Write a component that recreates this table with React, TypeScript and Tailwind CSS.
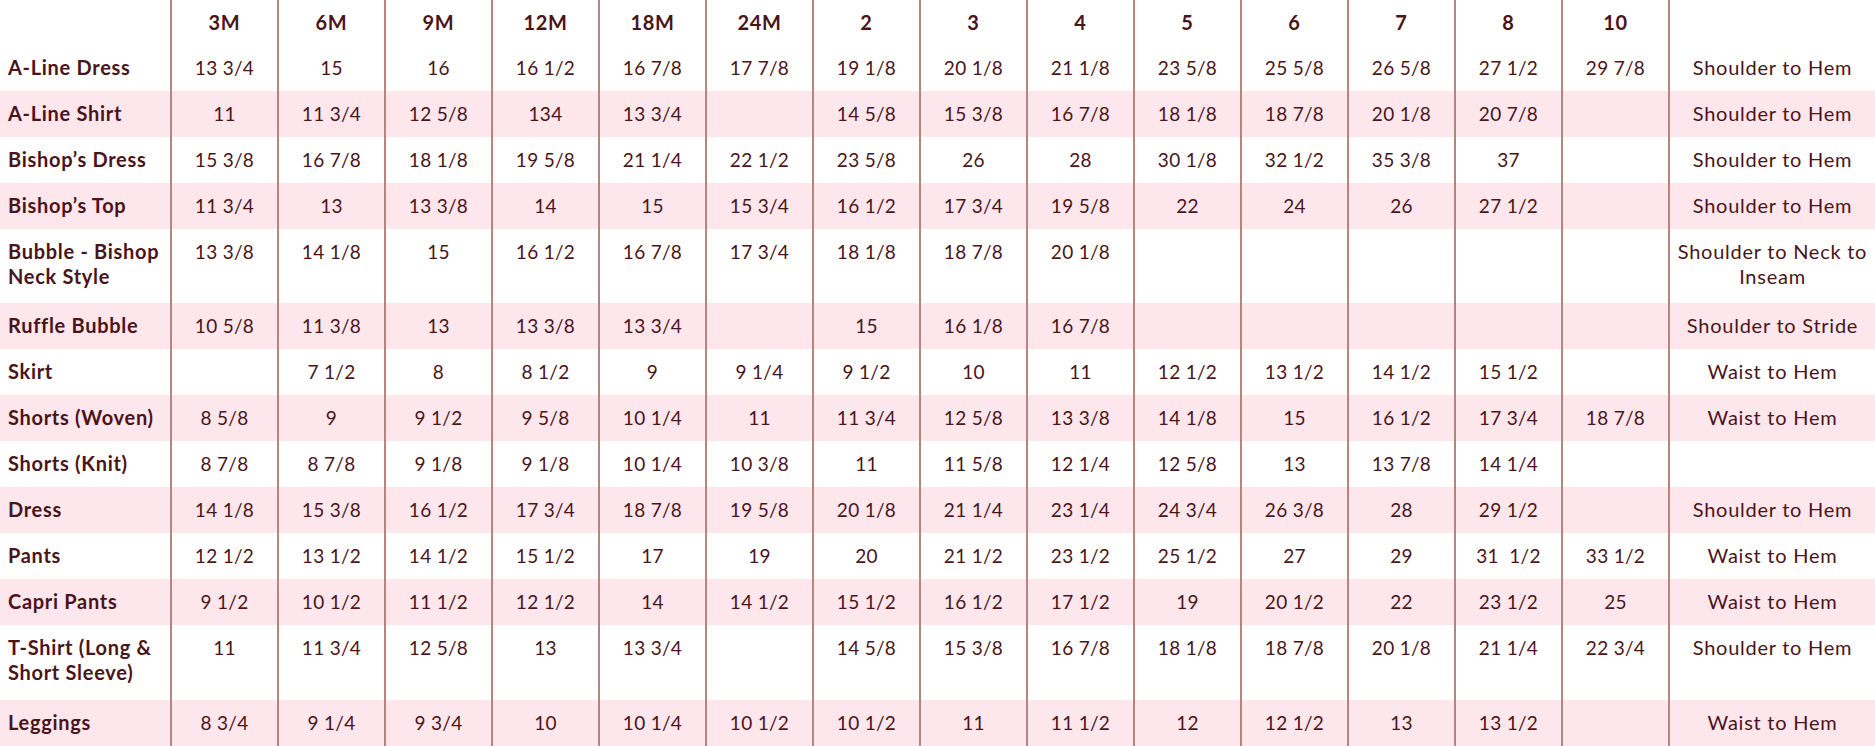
import React from "react";

type Row = { label: React.ReactNode; vals: string[]; note: React.ReactNode; pink: boolean; h: string };

const headers = ["3M", "6M", "9M", "12M", "18M", "24M", "2", "3", "4", "5", "6", "7", "8", "10"];

const rows: Row[] = [
  { label: "A-Line Dress", vals: ["13 3/4", "15", "16", "16 1/2", "16 7/8", "17 7/8", "19 1/8", "20 1/8", "21 1/8", "23 5/8", "25 5/8", "26 5/8", "27 1/2", "29 7/8"], note: "Shoulder to Hem", pink: false, h: "h-[46px]" },
  { label: "A-Line Shirt", vals: ["11", "11 3/4", "12 5/8", "134", "13 3/4", "", "14 5/8", "15 3/8", "16 7/8", "18 1/8", "18 7/8", "20 1/8", "20 7/8", ""], note: "Shoulder to Hem", pink: true, h: "h-[46px]" },
  { label: "Bishop’s Dress", vals: ["15 3/8", "16 7/8", "18 1/8", "19 5/8", "21 1/4", "22 1/2", "23 5/8", "26", "28", "30 1/8", "32 1/2", "35 3/8", "37", ""], note: "Shoulder to Hem", pink: false, h: "h-[46px]" },
  { label: "Bishop’s Top", vals: ["11 3/4", "13", "13 3/8", "14", "15", "15 3/4", "16 1/2", "17 3/4", "19 5/8", "22", "24", "26", "27 1/2", ""], note: "Shoulder to Hem", pink: true, h: "h-[46px]" },
  { label: <>Bubble - Bishop<br />Neck Style</>, vals: ["13 3/8", "14 1/8", "15", "16 1/2", "16 7/8", "17 3/4", "18 1/8", "18 7/8", "20 1/8", "", "", "", "", ""], note: <>Shoulder to Neck to<br />Inseam</>, pink: false, h: "h-[74px]" },
  { label: "Ruffle Bubble", vals: ["10 5/8", "11 3/8", "13", "13 3/8", "13 3/4", "", "15", "16 1/8", "16 7/8", "", "", "", "", ""], note: "Shoulder to Stride", pink: true, h: "h-[46px]" },
  { label: "Skirt", vals: ["", "7 1/2", "8", "8 1/2", "9", "9 1/4", "9 1/2", "10", "11", "12 1/2", "13 1/2", "14 1/2", "15 1/2", ""], note: "Waist to Hem", pink: false, h: "h-[46px]" },
  { label: "Shorts (Woven)", vals: ["8 5/8", "9", "9 1/2", "9 5/8", "10 1/4", "11", "11 3/4", "12 5/8", "13 3/8", "14 1/8", "15", "16 1/2", "17 3/4", "18 7/8"], note: "Waist to Hem", pink: true, h: "h-[46px]" },
  { label: "Shorts (Knit)", vals: ["8 7/8", "8 7/8", "9 1/8", "9 1/8", "10 1/4", "10 3/8", "11", "11 5/8", "12 1/4", "12 5/8", "13", "13 7/8", "14 1/4", ""], note: "", pink: false, h: "h-[46px]" },
  { label: "Dress", vals: ["14 1/8", "15 3/8", "16 1/2", "17 3/4", "18 7/8", "19 5/8", "20 1/8", "21 1/4", "23 1/4", "24 3/4", "26 3/8", "28", "29 1/2", ""], note: "Shoulder to Hem", pink: true, h: "h-[46px]" },
  { label: "Pants", vals: ["12 1/2", "13 1/2", "14 1/2", "15 1/2", "17", "19", "20", "21 1/2", "23 1/2", "25 1/2", "27", "29", "31\u00a0\u00a01/2", "33 1/2"], note: "Waist to Hem", pink: false, h: "h-[46px]" },
  { label: "Capri Pants", vals: ["9 1/2", "10 1/2", "11 1/2", "12 1/2", "14", "14 1/2", "15 1/2", "16 1/2", "17 1/2", "19", "20 1/2", "22", "23 1/2", "25"], note: "Waist to Hem", pink: true, h: "h-[46px]" },
  { label: <>T-Shirt (Long &amp;<br />Short Sleeve)</>, vals: ["11", "11 3/4", "12 5/8", "13", "13 3/4", "", "14 5/8", "15 3/8", "16 7/8", "18 1/8", "18 7/8", "20 1/8", "21 1/4", "22 3/4"], note: "Shoulder to Hem", pink: false, h: "h-[75px]" },
  { label: "Leggings", vals: ["8 3/4", "9 1/4", "9 3/4", "10", "10 1/4", "10 1/2", "10 1/2", "11", "11 1/2", "12", "12 1/2", "13", "13 1/2", ""], note: "Waist to Hem", pink: true, h: "h-[46px]" },
];

const grid = "grid grid-cols-[172px_repeat(14,107px)_1fr]";
const line = "border-r-2 border-[#b6857d]";

export default function App() {
  return (
    <div className="w-[1875px] h-[746px] overflow-hidden bg-white text-[#4a1419] font-['Lato','Liberation_Sans',sans-serif] text-[19px] leading-[26px]">
      <div className={`${grid} h-[45px] font-bold text-[20px] tracking-[0.7px]`}>
        <div className={line} />
        {headers.map((h) => (
          <div key={h} className={`${line} flex items-center justify-center pb-[2px]`}>
            {h}
          </div>
        ))}
        <div />
      </div>
      {rows.map((r, i) => (
        <div key={i} className={`${grid} ${r.h} ${r.pink ? "bg-[#fde6ec]" : "bg-white"}`}>
          <div className={`${line} pl-[8px] pt-[10px] font-bold text-[20px] tracking-[0.7px] leading-[25px] whitespace-nowrap`}>{r.label}</div>
          {r.vals.map((v, j) => (
            <div key={j} className={`${line} pt-[10px] text-center whitespace-pre tracking-[0.3px]`}>
              {v}
            </div>
          ))}
          <div className="pt-[10px] px-[4px] text-center text-[20px] tracking-[0.75px] leading-[25px] whitespace-nowrap">{r.note}</div>
        </div>
      ))}
    </div>
  );
}
